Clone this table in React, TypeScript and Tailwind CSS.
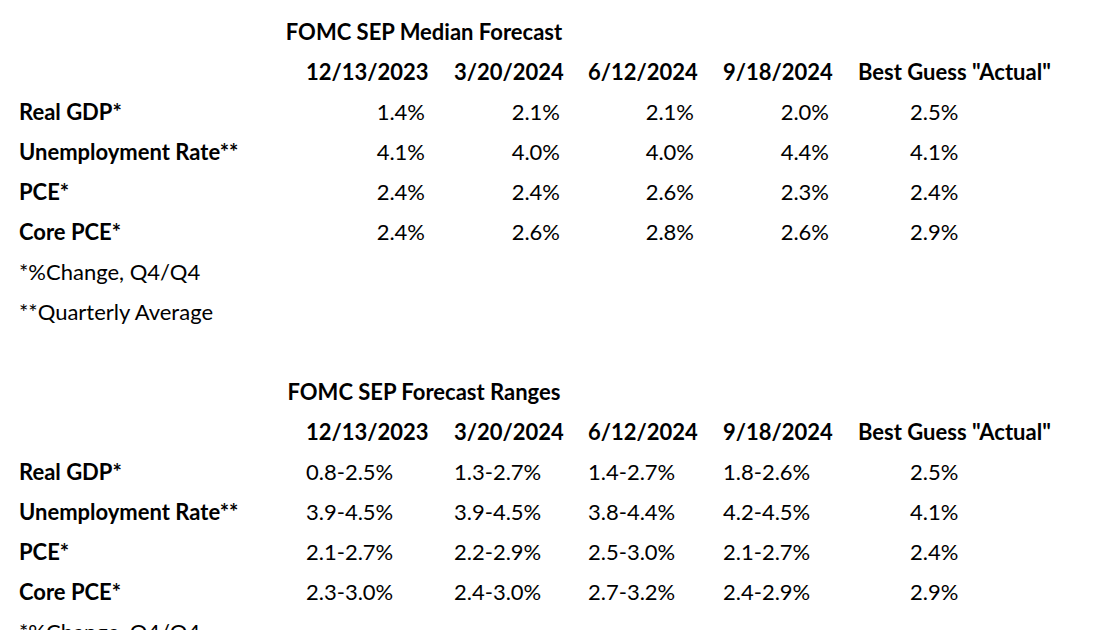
const medianRows = [
  { label: "Real GDP*", values: ["1.4%", "2.1%", "2.1%", "2.0%"], actual: "2.5%" },
  { label: "Unemployment Rate**", values: ["4.1%", "4.0%", "4.0%", "4.4%"], actual: "4.1%" },
  { label: "PCE*", values: ["2.4%", "2.4%", "2.6%", "2.3%"], actual: "2.4%" },
  { label: "Core PCE*", values: ["2.4%", "2.6%", "2.8%", "2.6%"], actual: "2.9%" },
];

const rangeRows = [
  { label: "Real GDP*", values: ["0.8-2.5%", "1.3-2.7%", "1.4-2.7%", "1.8-2.6%"], actual: "2.5%" },
  { label: "Unemployment Rate**", values: ["3.9-4.5%", "3.9-4.5%", "3.8-4.4%", "4.2-4.5%"], actual: "4.1%" },
  { label: "PCE*", values: ["2.1-2.7%", "2.2-2.9%", "2.5-3.0%", "2.1-2.7%"], actual: "2.4%" },
  { label: "Core PCE*", values: ["2.3-3.0%", "2.4-3.0%", "2.7-3.2%", "2.4-2.9%"], actual: "2.9%" },
];

const dates = ["12/13/2023", "3/20/2024", "6/12/2024", "9/18/2024"];

// column boxes: widths and gaps taken from the sheet
const colClass = [
  "w-[119px]",
  "ml-[29px] w-[106px]",
  "ml-[28px] w-[106px]",
  "ml-[29px] w-[106px]",
];

type Row = { label: string; values: string[]; actual: string };

const Title = ({ text }: { text: string }) => (
  <div className="h-[40px] flex items-center">
    <div className="w-[848px] text-center font-bold whitespace-nowrap">{text}</div>
  </div>
);

const Header = () => (
  <div className="h-[40px] flex items-center font-bold">
    <div className="w-[306px] shrink-0" />
    {dates.map((d, i) => (
      <div key={d} className={`${colClass[i]} shrink-0 text-right whitespace-nowrap`}>
        {d}
      </div>
    ))}
    <div className="ml-[29px] whitespace-nowrap">Best Guess "Actual"</div>
  </div>
);

const DataRow = ({ row, align }: { row: Row; align: "right" | "left" }) => (
  <div className="h-[40px] flex items-center">
    <div className="w-[306px] shrink-0 pl-[19px] font-bold whitespace-nowrap">{row.label}</div>
    {row.values.map((v, i) => (
      <div
        key={i}
        className={`${colClass[i]} shrink-0 whitespace-nowrap ${align === "right" ? "text-right" : "text-left"}`}
      >
        {v}
      </div>
    ))}
    <div className="ml-[29px] pl-[52px]">{row.actual}</div>
  </div>
);

const Note = ({ text }: { text: string }) => (
  <div className="h-[40px] flex items-center pl-[19px] whitespace-nowrap">{text}</div>
);

export default function App() {
  return (
    <div
      className="w-[1102px] h-[630px] overflow-hidden bg-white text-black text-[22px] leading-none pt-[12px]"
      style={{ fontFamily: "Lato, 'Liberation Sans', sans-serif" }}
    >
      {/* Median */}
      <Title text="FOMC SEP Median Forecast" />
      <Header />
      {medianRows.map((r) => (
        <DataRow key={r.label} row={r} align="right" />
      ))}
      <Note text="*%Change, Q4/Q4" />
      <Note text="**Quarterly Average" />
      <div className="h-[40px]" />

      {/* Ranges */}
      <Title text="FOMC SEP Forecast Ranges" />
      <Header />
      {rangeRows.map((r) => (
        <DataRow key={r.label} row={r} align="left" />
      ))}
      <Note text="*%Change, Q4/Q4" />
    </div>
  );
}
